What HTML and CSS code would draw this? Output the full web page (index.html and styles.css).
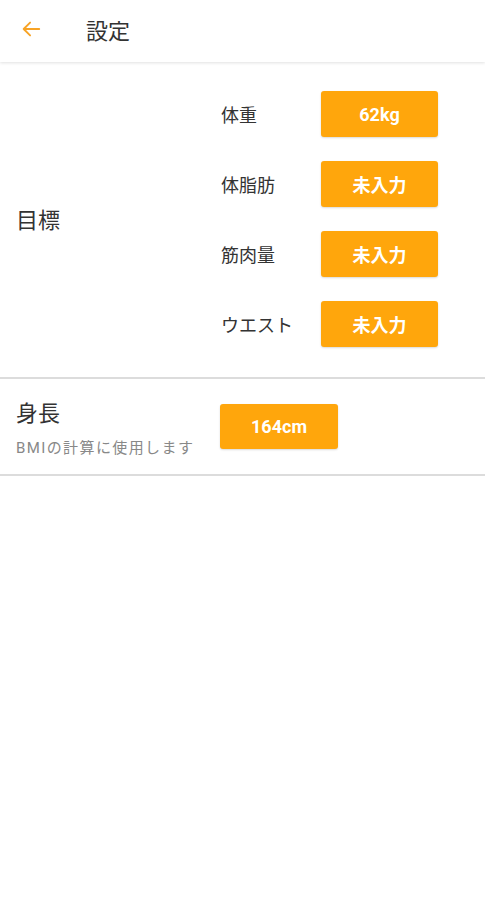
FILE: index.html
```html
<!DOCTYPE html>
<html lang="ja">
<head>
<meta charset="utf-8">
<link rel="stylesheet" href="styles.css">
</head>
<body>
<header class="appbar">
  <svg class="back" width="22" height="22" viewBox="0 0 24 24"><path d="M21 12H4M11 5l-7 7 7 7" fill="none" stroke="#f7a325" stroke-width="2" stroke-linecap="round" stroke-linejoin="round"/></svg>
  <h1 class="title">設定</h1>
</header>
<section class="section goals">
  <div class="sec-title">目標</div>
  <div class="rows">
    <div class="row"><span class="label">体重</span><button class="btn">62kg</button></div>
    <div class="row"><span class="label">体脂肪</span><button class="btn">未入力</button></div>
    <div class="row"><span class="label">筋肉量</span><button class="btn">未入力</button></div>
    <div class="row"><span class="label">ウエスト</span><button class="btn">未入力</button></div>
  </div>
</section>
<section class="section height">
  <div class="sec-head">
    <div class="sec-title">身長</div>
    <div class="sub">BMIの計算に使用します</div>
  </div>
  <button class="btn">164cm</button>
</section>
</body>
</html>
```
FILE: styles.css
```css
* { box-sizing: border-box; }
body {
  margin: 0;
  background: #fff;
  font-family: Roboto, "Noto Sans CJK JP", sans-serif;
  color: #333;
}
.appbar {
  height: 62px;
  display: flex;
  align-items: center;
  padding-left: 20px;
  box-shadow: 0 1px 3px rgba(0,0,0,0.12);
  position: relative;
}
.back { display: block; margin-top: -4px; }
.title {
  margin: -4px 0 0 44px;
  font-size: 22px;
  font-weight: 400;
  color: #333;
}
.section {
  display: flex;
  border-bottom: 2px solid #dcdcdc;
}
.goals {
  margin-top: 1px;
  padding: 28px 0 30px 16px;
  align-items: center;
}
.goals .sec-title { width: 205px; margin-top: 3px; }
.sec-title {
  font-size: 22px;
  line-height: 28px;
  color: #333;
}
.rows {
  display: flex;
  flex-direction: column;
  gap: 24px;
}
.row {
  display: flex;
  align-items: center;
}
.label {
  width: 100px;
  font-size: 18px;
  color: #333;
}
.btn {
  border: none;
  border-radius: 3px;
  background: #ffa60c;
  color: #fff;
  font-family: Roboto, "Noto Sans CJK JP", sans-serif;
  font-size: 18px;
  font-weight: 700;
  width: 117px;
  height: 46px;
  padding: 0;
  box-shadow: 0 1px 2px rgba(0,0,0,0.15);
}
.height {
  padding: 25px 0 25px 16px;
  align-items: flex-start;
}
.sec-head { width: 204px; margin: -4px 0 -9px; }
.sub {
  font-size: 15px;
  line-height: 20px;
  letter-spacing: 1.4px;
  color: #888;
  margin-top: 10px;
}
.height .btn { width: 118px; height: 45px; }
```
